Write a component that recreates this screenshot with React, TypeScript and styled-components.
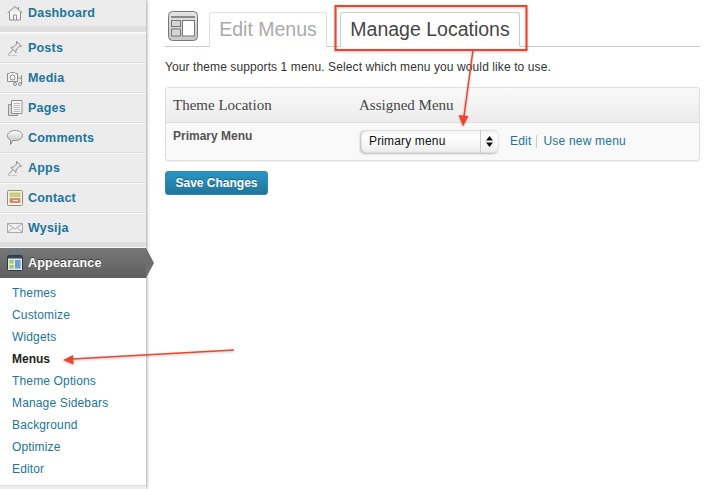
import React from 'react';
import styled, { createGlobalStyle } from 'styled-components';

const GlobalStyle = createGlobalStyle`
  html, body {
    margin: 0;
    padding: 0;
    background: #fff;
    overflow: hidden;
  }
  body {
    font-family: "Liberation Sans", Arial, sans-serif;
    font-size: 12px;
    color: #333;
  }
`;

const Page = styled.div`
  position: relative;
  display: flex;
  width: 714px;
  height: 489px;
  overflow: hidden;
`;

const Sidebar = styled.nav`
  flex: 0 0 146px;
  height: 489px;
  background: #ececec;
  box-shadow: 1px 0 3px rgba(0, 0, 0, 0.35);
  display: flex;
  flex-direction: column;
`;

const MenuItem = styled.div`
  flex: none;
  box-sizing: border-box;
  height: 30px;
  display: flex;
  align-items: center;
  gap: 5px;
  padding-left: 7px;
  border-bottom: 1px solid #dfdfdf;
  border-top: 1px solid #f7f7f7;
  font-size: 12.5px;
  letter-spacing: 0.2px;
  font-weight: 700;
  color: #21759b;
`;

const FirstItem = styled(MenuItem)`
  height: 27px;
  border-top: 0;
`;

const Separator = styled.div`
  flex: none;
  box-sizing: border-box;
  height: 5px;
  background: #dedede;
  border-bottom: 1px solid #f9f9f9;
`;

const FirstSeparator = styled(Separator)`
  height: 6px;
`;

const ActiveItem = styled.div`
  flex: none;
  position: relative;
  height: 30px;
  display: flex;
  align-items: center;
  gap: 5px;
  padding-left: 7px;
  background: linear-gradient(#777, #5f5f5f);
  font-size: 12.5px;
  letter-spacing: 0.2px;
  font-weight: 700;
  color: #fff;
  text-shadow: 0 -1px 0 #333;
  &::after {
    content: '';
    position: absolute;
    left: 100%;
    top: 0;
    border-style: solid;
    border-width: 15px 0 15px 8px;
    border-color: transparent transparent transparent #6d6d6d;
  }
`;

const SubMenu = styled.div`
  flex: none;
  background: #fff;
  padding: 4px 0 5px 12px;
  border-bottom: 1px solid #dfdfdf;
`;

const SubItem = styled.div<{ $current?: boolean }>`
  height: 22px;
  line-height: 22px;
  font-size: 12px;
  letter-spacing: ${(p) => (p.$current ? 0 : 0.15)}px;
  font-weight: ${(p) => (p.$current ? 700 : 400)};
  color: ${(p) => (p.$current ? '#222' : '#21759b')};
`;

const IconSlot = styled.span`
  width: 16px;
  height: 16px;
  flex: none;
  display: block;
  svg {
    display: block;
  }
`;

const Main = styled.main`
  flex: 1;
  padding: 11px 14px 0 19px;
  display: flex;
  flex-direction: column;
  align-items: stretch;
`;

const TabBar = styled.div`
  display: flex;
  align-items: flex-end;
  height: 35px;
  border-bottom: 1px solid #ccc;
`;

const ScreenIcon = styled.span`
  align-self: flex-start;
  display: block;
  width: 30px;
  height: 30px;
  margin: 0 11px 0 3px;
`;

const Tab = styled.div<{ $active?: boolean }>`
  height: 35px;
  box-sizing: border-box;
  margin-bottom: -1px;
  margin-right: 13px;
  padding-bottom: 1px;
  display: flex;
  align-items: center;
  justify-content: center;
  white-space: nowrap;
  font-size: 19.5px;
  border: 1px solid ${(p) => (p.$active ? '#ccc' : '#dfdfdf')};
  border-bottom: ${(p) => (p.$active ? '1px solid #fff' : '0')};
  border-radius: 3px 3px 0 0;
  background: #fff;
  color: ${(p) => (p.$active ? '#464646' : '#aaa')};
`;

const EditTab = styled(Tab)`
  width: 118px;
`;

const LocationsTab = styled(Tab)`
  width: 180px;
`;

const Intro = styled.p`
  margin: 13px 0 12px;
  font-size: 12px;
  letter-spacing: 0.1px;
  line-height: 15px;
  color: #333;
`;

const Panel = styled.div`
  box-sizing: border-box;
  height: 74px;
  border: 1px solid #dfdfdf;
  border-radius: 3px;
  background: #f9f9f9;
  box-shadow: 0 1px 1px rgba(0, 0, 0, 0.06);
`;

const Columns = styled.div`
  display: grid;
  grid-template-columns: 186px 1fr;
  padding-left: 7px;
`;

const PanelHead = styled(Columns)`
  box-sizing: border-box;
  height: 35px;
  align-items: center;
  background: linear-gradient(#f9f9f9, #ececec);
  border-bottom: 1px solid #dfdfdf;
  border-radius: 3px 3px 0 0;
  font-family: "Liberation Serif", Georgia, serif;
  font-size: 15px;
  color: #464646;
`;

const PanelRow = styled(Columns)`
  height: 37px;
`;

const RowLabel = styled.div`
  font-size: 12px;
  font-weight: 700;
  color: #555;
  padding-top: 6px;
`;

const RowControls = styled.div`
  display: flex;
  align-items: center;
  padding-bottom: 1px;
`;

const SelectBox = styled.div`
  width: 138px;
  height: 23px;
  box-sizing: border-box;
  margin: 0 12px 0 1px;
  display: flex;
  align-items: center;
  justify-content: space-between;
  padding-left: 9px;
  border-radius: 5px;
  background: linear-gradient(#f2f2f2, #fff 30%, #ececec);
  box-shadow: inset 1px 0 2px rgba(0, 0, 0, 0.25), 0 1px 2px rgba(0, 0, 0, 0.25);
  font-size: 12px;
  letter-spacing: 0.15px;
  color: #111;
`;

const SelectArrows = styled.span`
  width: 17px;
  height: 100%;
  border-left: 1px solid #ccc;
  display: flex;
  align-items: center;
  justify-content: center;
`;

const RowLink = styled.span`
  font-size: 12px;
  letter-spacing: 0.2px;
  color: #21759b;
`;

const LinkDivider = styled.span`
  width: 1px;
  height: 13px;
  margin: 0 6px 0 5px;
  background: #ccc;
`;

const SaveButton = styled.button`
  align-self: flex-start;
  width: 103px;
  height: 24px;
  margin-top: 10px;
  padding: 0;
  border: 1px solid #298cba;
  border-radius: 3px;
  background: linear-gradient(#2a95c5, #21759b);
  color: #fff;
  font-family: "Liberation Sans", Arial, sans-serif;
  font-size: 12px;
  font-weight: 700;
  text-shadow: 0 -1px 0 rgba(0, 0, 0, 0.3);
`;

const Overlay = styled.svg`
  position: absolute;
  left: 0;
  top: 0;
  pointer-events: none;
  filter: drop-shadow(0 1px 1px rgba(0, 0, 0, 0.25));
`;

const gray = '#8f8f8f';

const HomeIcon = () => (
  <svg width="16" height="16" viewBox="0 0 16 16" fill="none" stroke={gray}>
    <path d="M2.500 7v8h11V7" fill="#f6f6f6" />
    <path d="M.5 8 8 1.500 15.500 8" />
    <path d="M6.500 15v-5h3v5" />
    <path d="M11.500 2v3" />
  </svg>
);

const PinIcon = () => (
  <svg width="16" height="16" viewBox="0 0 16 16" fill="none" stroke={gray}>
    <path d="M9.500 1.500 14.500 6 12 6.500 9 10 9 12.500 3.800 7.500 6.500 7 9.500 4Z" fill="#e8e8e8" />
    <path d="M5.500 10 1.500 14.500" />
    <path d="M1 15.500h9" stroke="#ccc" />
  </svg>
);

const MediaIcon = () => (
  <svg width="16" height="16" viewBox="0 0 16 16" fill="none" stroke={gray}>
    <path d="M.5 3.500h2l1-1h4l1 1h2v8h-10Z" fill="#f2f2f2" />
    <circle cx="5.500" cy="7.500" r="2.500" />
    <path d="M14.500 5v9M10.500 8h4" />
    <circle cx="8" cy="14" r="1.500" />
    <circle cx="13" cy="14" r="1.500" />
  </svg>
);

const PagesIcon = () => (
  <svg width="16" height="16" viewBox="0 0 16 16" fill="none" stroke={gray}>
    <path d="M1.500 4.500h9v11h-9Z" fill="#d8d8d8" />
    <path d="M4.500 .5h10.500v13H4.500Z" fill="#f6f6f6" />
    <path d="M6.500 3.500h6.500M6.500 5.500h6.500M6.500 7.500h6.500M6.500 9.500h6.500M6.500 11.500h6.500" stroke="#bbb" />
  </svg>
);

const CommentIcon = () => (
  <svg width="16" height="16" viewBox="0 0 16 16" stroke={gray}>
    <defs>
      <linearGradient id="bubble" x1="0" y1="0" x2="0" y2="1">
        <stop offset="0" stopColor="#fff" />
        <stop offset="1" stopColor="#b5b5b5" />
      </linearGradient>
    </defs>
    <path d="M8 .5c4.200 0 7.500 2.200 7.500 5s-3.300 5-7.500 5H6L3.500 14.500V10C1.600 9.200.5 7.500.5 5.500.5 2.700 3.800.5 8 .5Z" fill="url(#bubble)" />
  </svg>
);

const ContactIcon = () => (
  <svg width="16" height="16" viewBox="0 0 16 16">
    <rect x=".5" y=".5" width="15" height="15" rx="1" fill="#f4f2d8" stroke="#8f8f8f" />
    <rect x="3" y="3" width="10" height="3.500" fill="#c9d67e" stroke="#9aa85a" strokeWidth=".5" />
    <rect x="3" y="8.500" width="10" height="4" fill="#e8836a" stroke="#c9664e" strokeWidth=".5" />
    <path d="M6 10.500h5" stroke="#fff" />
  </svg>
);

const MailIcon = () => (
  <svg width="16" height="16" viewBox="0 0 16 16" fill="#f0f0f0" stroke="#aaa">
    <rect x=".5" y="3.500" width="15" height="9" />
    <path d="M.5 3.500 8 9l7.500-5.500M.5 12.500 6 7.500M15.500 12.500 10 7.500" fill="none" />
  </svg>
);

const AppearanceIcon = () => (
  <svg width="16" height="16" viewBox="0 0 16 16">
    <rect x=".5" y=".5" width="15" height="15" rx="1" fill="#dfe8ee" stroke="#2b3a44" />
    <rect x="1" y="1" width="14" height="2.500" fill="#33454f" />
    <rect x="2.500" y="5" width="4" height="3.500" fill="#a9c653" />
    <rect x="2.500" y="10" width="4" height="3.500" fill="#a9c653" />
    <rect x="8" y="5" width="5.500" height="8.500" fill="#6f9fd0" />
  </svg>
);

const MenusScreenIcon = () => (
  <svg width="30" height="30" viewBox="0 0 30 30">
    <defs>
      <linearGradient id="screenBg" x1="0" y1="0" x2="0" y2="1">
        <stop offset="0" stopColor="#e4e4e4" />
        <stop offset="1" stopColor="#c8c8c8" />
      </linearGradient>
    </defs>
    <rect x=".5" y=".5" width="29" height="29" rx="4" fill="url(#screenBg)" stroke="#777" />
    <rect x="3" y="5" width="24" height="2" fill="#8a8a8a" />
    <rect x="3.500" y="9.500" width="9" height="6" fill="#d5d5d5" stroke="#777" />
    <rect x="3.500" y="18" width="9" height="7" fill="#d5d5d5" stroke="#777" />
    <rect x="14.500" y="9.500" width="12" height="15.500" fill="#fff" stroke="#777" />
  </svg>
);

const menuItems = [
  { label: 'Posts', icon: <PinIcon /> },
  { label: 'Media', icon: <MediaIcon /> },
  { label: 'Pages', icon: <PagesIcon /> },
  { label: 'Comments', icon: <CommentIcon /> },
  { label: 'Apps', icon: <PinIcon /> },
  { label: 'Contact', icon: <ContactIcon /> },
  { label: 'Wysija', icon: <MailIcon /> },
];

const subItems = [
  'Themes',
  'Customize',
  'Widgets',
  'Menus',
  'Theme Options',
  'Manage Sidebars',
  'Background',
  'Optimize',
  'Editor',
];

const App = () => (
  <Page>
    <GlobalStyle />
    <Sidebar>
      <FirstItem>
        <IconSlot>
          <HomeIcon />
        </IconSlot>
        Dashboard
      </FirstItem>
      <FirstSeparator />
      {menuItems.map((item) => (
        <MenuItem key={item.label}>
          <IconSlot>{item.icon}</IconSlot>
          {item.label}
        </MenuItem>
      ))}
      <Separator />
      <ActiveItem>
        <IconSlot>
          <AppearanceIcon />
        </IconSlot>
        Appearance
      </ActiveItem>
      <SubMenu>
        {subItems.map((label) => (
          <SubItem key={label} $current={label === 'Menus'}>
            {label}
          </SubItem>
        ))}
      </SubMenu>
    </Sidebar>
    <Main>
      <TabBar>
        <ScreenIcon>
          <MenusScreenIcon />
        </ScreenIcon>
        <EditTab>Edit Menus</EditTab>
        <LocationsTab $active>Manage Locations</LocationsTab>
      </TabBar>
      <Intro>Your theme supports 1 menu. Select which menu you would like to use.</Intro>
      <Panel>
        <PanelHead>
          <div>Theme Location</div>
          <div>Assigned Menu</div>
        </PanelHead>
        <PanelRow>
          <RowLabel>Primary Menu</RowLabel>
          <RowControls>
            <SelectBox>
              Primary menu
              <SelectArrows>
                <svg width="7" height="11" viewBox="0 0 7 11" fill="#111">
                  <path d="M3.500 0 7 4.500H0ZM3.500 11 0 6.500h7Z" />
                </svg>
              </SelectArrows>
            </SelectBox>
            <RowLink>Edit</RowLink>
            <LinkDivider />
            <RowLink>Use new menu</RowLink>
          </RowControls>
        </PanelRow>
      </Panel>
      <SaveButton>Save Changes</SaveButton>
    </Main>
    <Overlay width="714" height="489" viewBox="0 0 714 489">
      <rect x="335.500" y="6" width="191" height="44" fill="none" stroke="#f0432b" strokeWidth="2" />
      <path d="M473 50 464 116" stroke="#f0432b" strokeWidth="1.500" fill="none" />
      <path d="M458.500 115 468.500 116 463 126.500Z" fill="#f0432b" />
      <path d="M234 350 72 359" stroke="#f0432b" strokeWidth="1.500" fill="none" />
      <path d="M63 360 73 355 73.500 364.500Z" fill="#f0432b" />
    </Overlay>
  </Page>
);

export default App;
